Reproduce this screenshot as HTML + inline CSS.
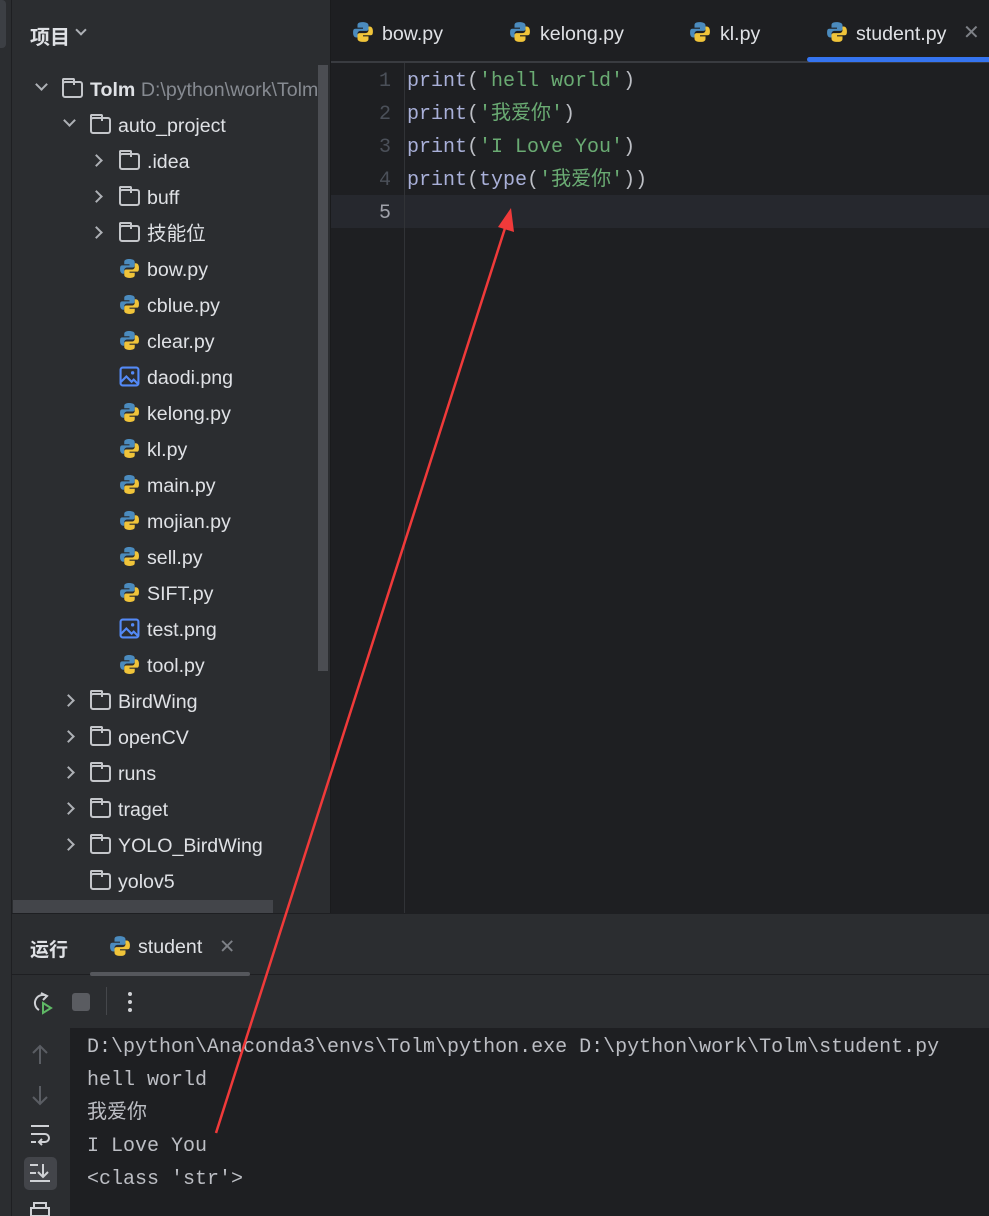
<!DOCTYPE html><html><head><meta charset="utf-8"><style>
*{margin:0;padding:0;box-sizing:border-box}
body{width:989px;height:1216px;background:#1e1f22;position:relative;overflow:hidden;font-family:"Liberation Sans","Noto Sans CJK SC",sans-serif;color:#dfe1e5}
.a{position:absolute}
.row{position:absolute;height:36px;line-height:36px;font-size:19.6px;white-space:nowrap;color:#dfe1e5}
.mono{font-family:"Liberation Mono","Noto Sans CJK SC",monospace;font-size:20px}
.chev{position:absolute;width:9px;height:9px;border-right:2px solid #aeb1b6;border-bottom:2px solid #aeb1b6}
.fold{position:absolute;width:21px;height:17px;border:2px solid #c4c6ca;border-radius:3px}
.fold:before{content:"";position:absolute;left:-2px;top:-5px;width:9px;height:5px;border:2px solid #c4c6ca;border-bottom:none;border-radius:2px 2px 0 0}
.g{color:#6aab73}.p{color:#a9b0d9}.w{color:#bcbec4}
</style></head><body>
<div class="a" style="left:0;top:0;width:12px;height:1216px;background:#2b2d30;border-right:1px solid #1e1f22"></div>
<div class="a" style="left:0;top:0;width:6px;height:48px;background:#3c3f44;border-radius:0 4px 4px 0"></div>
<div class="a" style="left:12px;top:0;width:318px;height:913px;background:#2b2d30"></div>
<div class="a" style="left:318px;top:65px;width:10px;height:606px;background:#4b4d52"></div>
<div class="a" style="left:30px;top:21px;font-size:20px;font-weight:bold">项目</div>
<div class="chev" style="left:77px;top:26px;transform:rotate(45deg);width:8px;height:8px;border-color:#aeb1b6"></div>
<svg width="0" height="0" style="position:absolute"><defs>
<symbol id="py" viewBox="0 0 20 20"><path d="M9.5 1C5 1 5 3 5 4v2h5v1H3C1 7 1 9 1 11s1 4 3 4h1v-3c0-2 1-3 3-3h5c1.5 0 2-1 2-2V4c0-2-2-3-5.5-3z" fill="#4b8bbe"/><path d="M10.5 19c4.5 0 4.5-2 4.5-3v-2h-5v-1h7c2 0 2-2 2-4s-1-4-3-4h-1v3c0 2-1 3-3 3H7c-1.5 0-2 1-2 2v3c0 2 2 3 5.5 3z" fill="#f0c43a"/></symbol>
<symbol id="img" viewBox="0 0 20 20"><rect x="1.5" y="1.5" width="17" height="17" rx="2" fill="none" stroke="#548af7" stroke-width="2"/><path d="M2 15l5-5 5 5 2-2 4 4" fill="none" stroke="#548af7" stroke-width="2"/><circle cx="13" cy="6.5" r="1.6" fill="#548af7"/></symbol>
</defs></svg>
<!-- tree -->
<div class="chev" style="left:37px;top:80px;transform:rotate(45deg)"></div><div class="fold" style="left:62px;top:81px"></div>
<div class="row" style="left:90px;top:72px"><b>Tolm</b> <span style="color:#868a91">D:\python\work\Tolm</span></div>
<div class="chev" style="left:65px;top:116px;transform:rotate(45deg)"></div><div class="fold" style="left:90px;top:117px"></div>
<div class="row" style="left:118px;top:108px">auto_project</div>
<div class="chev" style="left:92px;top:156px;transform:rotate(-45deg)"></div><div class="fold" style="left:119px;top:153px"></div><div class="row" style="left:147px;top:144px">.idea</div>
<div class="chev" style="left:92px;top:192px;transform:rotate(-45deg)"></div><div class="fold" style="left:119px;top:189px"></div><div class="row" style="left:147px;top:180px">buff</div>
<div class="chev" style="left:92px;top:228px;transform:rotate(-45deg)"></div><div class="fold" style="left:119px;top:225px"></div><div class="row" style="left:147px;top:216px">技能位</div>
<svg class="a" style="left:119px;top:258px" width="21" height="21"><use href="#py"/></svg><div class="row" style="left:147px;top:252px">bow.py</div>
<svg class="a" style="left:119px;top:294px" width="21" height="21"><use href="#py"/></svg><div class="row" style="left:147px;top:288px">cblue.py</div>
<svg class="a" style="left:119px;top:330px" width="21" height="21"><use href="#py"/></svg><div class="row" style="left:147px;top:324px">clear.py</div>
<svg class="a" style="left:119px;top:366px" width="21" height="21"><use href="#img"/></svg><div class="row" style="left:147px;top:360px">daodi.png</div>
<svg class="a" style="left:119px;top:402px" width="21" height="21"><use href="#py"/></svg><div class="row" style="left:147px;top:396px">kelong.py</div>
<svg class="a" style="left:119px;top:438px" width="21" height="21"><use href="#py"/></svg><div class="row" style="left:147px;top:432px">kl.py</div>
<svg class="a" style="left:119px;top:474px" width="21" height="21"><use href="#py"/></svg><div class="row" style="left:147px;top:468px">main.py</div>
<svg class="a" style="left:119px;top:510px" width="21" height="21"><use href="#py"/></svg><div class="row" style="left:147px;top:504px">mojian.py</div>
<svg class="a" style="left:119px;top:546px" width="21" height="21"><use href="#py"/></svg><div class="row" style="left:147px;top:540px">sell.py</div>
<svg class="a" style="left:119px;top:582px" width="21" height="21"><use href="#py"/></svg><div class="row" style="left:147px;top:576px">SIFT.py</div>
<svg class="a" style="left:119px;top:618px" width="21" height="21"><use href="#img"/></svg><div class="row" style="left:147px;top:612px">test.png</div>
<svg class="a" style="left:119px;top:654px" width="21" height="21"><use href="#py"/></svg><div class="row" style="left:147px;top:648px">tool.py</div>
<div class="chev" style="left:64px;top:696px;transform:rotate(-45deg)"></div><div class="fold" style="left:90px;top:693px"></div><div class="row" style="left:118px;top:684px">BirdWing</div>
<div class="chev" style="left:64px;top:732px;transform:rotate(-45deg)"></div><div class="fold" style="left:90px;top:729px"></div><div class="row" style="left:118px;top:720px">openCV</div>
<div class="chev" style="left:64px;top:768px;transform:rotate(-45deg)"></div><div class="fold" style="left:90px;top:765px"></div><div class="row" style="left:118px;top:756px">runs</div>
<div class="chev" style="left:64px;top:804px;transform:rotate(-45deg)"></div><div class="fold" style="left:90px;top:801px"></div><div class="row" style="left:118px;top:792px">traget</div>
<div class="chev" style="left:64px;top:840px;transform:rotate(-45deg)"></div><div class="fold" style="left:90px;top:837px"></div><div class="row" style="left:118px;top:828px">YOLO_BirdWing</div>
<div class="fold" style="left:90px;top:873px"></div><div class="row" style="left:118px;top:864px">yolov5</div>
<div class="a" style="left:13px;top:900px;width:260px;height:13px;background:#43454a"></div>
<!-- tabs -->
<div class="a" style="left:330px;top:0;width:1px;height:913px;background:#1a1b1d"></div>
<div class="a" style="left:331px;top:61px;width:658px;height:2px;background:#393b40"></div>
<svg class="a" style="left:352px;top:21px" width="22" height="22"><use href="#py"/></svg><div class="row" style="left:382px;top:16px">bow.py</div>
<svg class="a" style="left:509px;top:21px" width="22" height="22"><use href="#py"/></svg><div class="row" style="left:540px;top:16px">kelong.py</div>
<svg class="a" style="left:689px;top:21px" width="22" height="22"><use href="#py"/></svg><div class="row" style="left:720px;top:16px">kl.py</div>
<svg class="a" style="left:826px;top:21px" width="22" height="22"><use href="#py"/></svg><div class="row" style="left:856px;top:16px">student.py</div>
<div class="row" style="left:963px;top:15px;color:#7e8187;font-size:20px">✕</div>
<div class="a" style="left:807px;top:57px;width:182px;height:5px;background:#3574f0;border-radius:3px 0 0 3px"></div>
<!-- editor -->
<div class="a" style="left:331px;top:195px;width:658px;height:33px;background:#26282e"></div>
<div class="a" style="left:404px;top:63px;width:1px;height:850px;background:#313337"></div>
<div class="a mono" style="left:331px;top:65px;width:60px;text-align:right;line-height:33px;color:#4b5059">1<br>2<br>3<br>4<br><span style="color:#a1a3ab">5</span></div>
<div class="a mono" style="left:407px;top:65px;line-height:33px;white-space:pre"><span class="p">print</span><span class="w">(</span><span class="g">'hell world'</span><span class="w">)</span>
<span class="p">print</span><span class="w">(</span><span class="g">'我爱你'</span><span class="w">)</span>
<span class="p">print</span><span class="w">(</span><span class="g">'I Love You'</span><span class="w">)</span>
<span class="p">print</span><span class="w">(</span><span class="p">type</span><span class="w">(</span><span class="g">'我爱你'</span><span class="w">))</span></div>
<!-- bottom panel -->
<div class="a" style="left:12px;top:913px;width:977px;height:115px;background:#2b2d30;border-top:1px solid #1e1f22"></div>
<div class="a" style="left:12px;top:974px;width:977px;height:1px;background:#1e1f22"></div>
<div class="a" style="left:12px;top:1028px;width:58px;height:188px;background:#2b2d30"></div>
<div class="a" style="left:30px;top:935px;font-size:19px;font-weight:bold">运行</div>
<svg class="a" style="left:109px;top:935px" width="22" height="22"><use href="#py"/></svg><div class="row" style="left:138px;top:929px">student</div>
<div class="row" style="left:219px;top:929px;color:#7e8187">✕</div>
<div class="a" style="left:90px;top:972px;width:160px;height:4px;background:#55575c;border-radius:2px"></div>
<svg class="a" style="left:29px;top:990px" width="26" height="26" fill="none" stroke="#cfd1d5" stroke-width="2"><path d="M18 6a8 8 0 1 0-8 14"/><path d="M12 3l6 3-4 4"/><path d="M14 13l8 5-8 5z" stroke="#5fb865"/></svg>
<div class="a" style="left:72px;top:993px;width:18px;height:18px;background:#5a5c61;border-radius:3px"></div>
<div class="a" style="left:106px;top:987px;width:1px;height:28px;background:#45474b"></div>
<div class="a" style="left:128px;top:992px;width:4px;height:4px;background:#cfd1d5;border-radius:2px;box-shadow:0 8px 0 #cfd1d5,0 16px 0 #cfd1d5"></div>
<svg class="a" style="left:28px;top:1042px" width="24" height="170" fill="none" stroke-width="2">
<path d="M12 4v18M5 11l7-7 7 7" stroke="#5a5d63"/><path d="M12 44v18M5 55l7 7 7-7" stroke="#5a5d63"/>
<path d="M3 84h18M3 92h14a4 4 0 0 1 0 8h-5M14 97l-3 3 3 3M3 100h5" stroke="#cfd1d5"/>
</svg>
<div class="a" style="left:24px;top:1157px;width:33px;height:33px;background:#43454a;border-radius:5px"></div>
<svg class="a" style="left:28px;top:1161px" width="24" height="24" fill="none" stroke="#cfd1d5" stroke-width="2"><path d="M2 4h8M2 12h6M2 20h20M15 3v13M10 11l5 5 5-5"/></svg>
<svg class="a" style="left:28px;top:1200px" width="24" height="16" fill="none" stroke="#cfd1d5" stroke-width="2"><path d="M6 8V3h12v5M3 8h18v8H3z"/></svg>
<div class="a mono" style="left:87px;top:1031px;line-height:33px;white-space:pre;color:#bcbec4">D:\python\Anaconda3\envs\Tolm\python.exe D:\python\work\Tolm\student.py
hell world
我爱你
I Love You
&lt;class 'str'&gt;</div>
<!-- red arrow -->
<svg class="a" style="left:0;top:0" width="989" height="1216"><line x1="216" y1="1133" x2="506" y2="225" stroke="#f03a3a" stroke-width="2.5"/><path d="M511 208l3 24-16-5z" fill="#f03a3a"/></svg>
</body></html>
